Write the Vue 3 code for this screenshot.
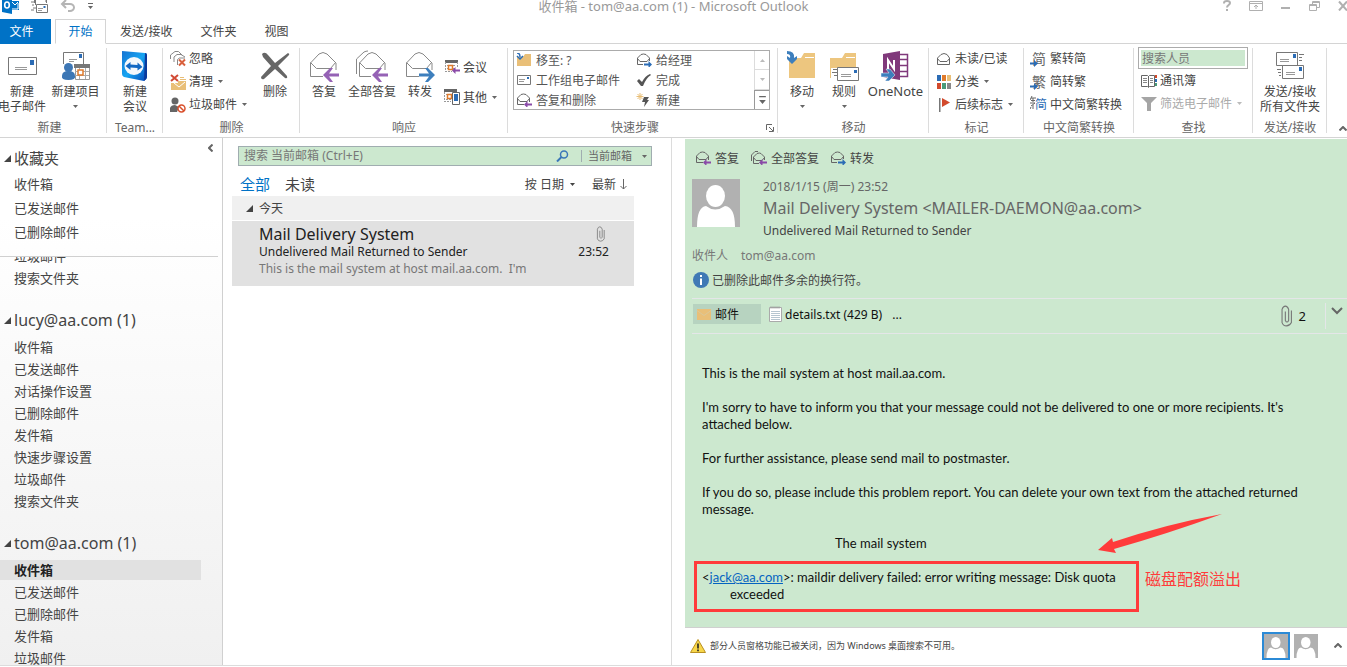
<script setup>
import { ref } from 'vue'

const searchText = ref('')
const personText = ref('')
const scope = ref('当前邮箱')

const favorites = ['收件箱', '已发送邮件', '已删除邮件']
const leading = ['垃圾邮件', '搜索文件夹']
const accounts = [
  {
    name: 'lucy@aa.com (1)',
    folders: ['收件箱', '已发送邮件', '对话操作设置', '已删除邮件', '发件箱', '快速步骤设置', '垃圾邮件', '搜索文件夹'],
    active: -1,
  },
  {
    name: 'tom@aa.com (1)',
    folders: ['收件箱', '已发送邮件', '已删除邮件', '发件箱', '垃圾邮件'],
    active: 0,
  },
]
const quickSteps = [
  { icon: 'folder-move', text: '移至: ?' },
  { icon: 'mail-reply-fwd', text: '给经理' },
  { icon: 'mail-flat', text: '工作组电子邮件' },
  { icon: 'check', text: '完成' },
  { icon: 'mail-reply', text: '答复和删除' },
  { icon: 'spark', text: '新建' },
]
const windowButtons = [
  { icon: 'help', label: '帮助' },
  { icon: 'ribbon-opts', label: '功能区显示选项' },
  { icon: 'minimize', label: '最小化' },
  { icon: 'restore', label: '还原' },
  { icon: 'close', label: '关闭' },
]
</script>

<template>
  <div class="app">
    <svg class="defs" aria-hidden="true">
      <symbol id="caret" viewBox="0 0 5 3"><path d="M0 0h5L2.500 3z" fill="currentColor" /></symbol>
      <symbol id="tri" viewBox="0 0 7 7"><path d="M7 0v7H0z" fill="#444" /></symbol>
      <symbol id="outlook" viewBox="0 0 17 14">
        <path d="M0 0h10v14L0 12z" fill="#0072c6" />
        <path d="M10 1h7v9h-7z" fill="#0072c6" />
        <path d="M10 2l3 3 3-3M10 9h6V3" fill="none" stroke="#fff" stroke-width="1" />
        <ellipse cx="5" cy="5" rx="2.300" ry="3" fill="none" stroke="#fff" stroke-width="1.600" />
      </symbol>
      <symbol id="send-all-sm" viewBox="0 0 17 14">
        <path d="M3.500 3V0M0 2h3M1 5h2M2 8h3M0 10h3M15 0v2" stroke="#777" fill="none" />
        <path d="M4.500 5V-2h11v5" stroke="#777" fill="none" />
        <path d="M5.500 4.500h11v8h-11z" fill="#fff" stroke="#777" />
        <path d="M7 8.500h5M7 10.500h4" stroke="#999" /><path d="M12.500 6h2v2h-2z" fill="#2b6cb5" />
      </symbol>
      <symbol id="undo" viewBox="0 0 16 12">
        <path d="M2 4h8a4 3.500 0 0 1 0 7H8M6 0L2 4l4 4" fill="none" stroke="#b5b5b5" stroke-width="2" />
      </symbol>
      <symbol id="qat" viewBox="0 0 5 6"><path d="M0 0h5v1H0zM0 3h5L2.500 6z" fill="#666" /></symbol>
      <symbol id="help" viewBox="0 0 14 12">
        <path d="M4 3.500V3a3 2 0 0 1 6 0c0 2-3 2-3 4.500M7 9v2" fill="none" stroke="currentColor" stroke-width="2" />
      </symbol>
      <symbol id="ribbon-opts" viewBox="0 0 14 12">
        <path d="M.5 1.500h13v9H.5zM.5 3.500h13M7 9V5M5 7l2-2 2 2" fill="none" stroke="currentColor" />
      </symbol>
      <symbol id="minimize" viewBox="0 0 14 12"><path d="M3 7h9v2H3z" fill="currentColor" /></symbol>
      <symbol id="restore" viewBox="0 0 14 12">
        <path d="M2.500 4.500h7v6h-7zM2 5.500h8M5.500 4V1.500h7v6H10M5 2.500h8" fill="none" stroke="currentColor" />
      </symbol>
      <symbol id="close" viewBox="0 0 14 12"><path d="M3 1.500l8 9M11 1.500l-8 9" stroke="currentColor" stroke-width="2" /></symbol>

      <symbol id="new-mail" viewBox="0 0 30 32">
        <path d="M1.500 7.500h28v17h-28z" fill="#fff" stroke="#777" />
        <path d="M8 17.500h12M8 19.500h12" stroke="#999" /><path d="M23 10h4v5h-4z" fill="#2b6cb5" />
      </symbol>
      <symbol id="new-items" viewBox="0 0 30 32">
        <path d="M2.500 14V2.500h20v12" fill="#fff" stroke="#777" />
        <path d="M8 9.500h8M8 11.500h5" stroke="#999" /><path d="M18 4h3v4h-3z" fill="#2b6cb5" />
        <path d="M14.500 15.500h14v14h-14z" fill="#fff" stroke="#999" />
        <path d="M13 14h16v4H13z" fill="#777" />
        <path d="M14 21.500h14M14 25.500h14M18.500 18v11M24.500 18v11" stroke="#aaa" />
        <path d="M17 20h5v5h-5z" fill="#fff" stroke="#e07b2c" stroke-width="1.500" />
        <circle cx="7.500" cy="17.500" r="4.500" fill="#3d77b5" />
        <path d="M1 26q0-5 6.500-5T14 26q1 4-6.500 4T1 26z" fill="#3d77b5" />
      </symbol>
      <symbol id="teamviewer" viewBox="0 0 30 32">
        <defs>
          <linearGradient id="tvg" x1="0" y1="0" x2="1" y2="1">
            <stop offset="0" stop-color="#1673d2" /><stop offset=".5" stop-color="#16a5f2" /><stop offset="1" stop-color="#0546b8" />
          </linearGradient>
        </defs>
        <path d="M2 1l23 2q2 0 2 2v22q0 2-3 4L4 27q-2-1-2-3z" fill="url(#tvg)" />
        <path d="M25 3q2 0 2 2v22q0 2-3 4z" fill="#0a3a9c" />
        <ellipse cx="14" cy="16" rx="9.500" ry="9" fill="#f4f8fc" />
        <path d="M5.500 16l5-4v2.500l7 .5v-2.500l5 4.500-5 3.500v-2.500l-7-.5v2.500z" fill="#1268c4" />
      </symbol>
      <symbol id="ignore" viewBox="0 0 16 16">
        <path d="M.5 8V4L5 .5h3.500L12 4M4 11V6l3-2.500h4l4 2.500M7.500 14V8.500L9.500 7H15" fill="none" stroke="#888" />
        <path d="M9 8.500l6 6M15 8.500l-6 6" stroke="#d9603c" stroke-width="2" />
      </symbol>
      <symbol id="clean" viewBox="0 0 16 16">
        <path d="M1 1l7 6M8 1L1 7" stroke="#d24a35" stroke-width="2" />
        <path d="M10 3.500h4M10 5.500h6" stroke="#e9bf78" stroke-width="1" />
        <path d="M1 9h7V7h8v9H1z" fill="#e9bf78" /><path d="M4 9l5 4 6-5" fill="none" stroke="#fff" />
      </symbol>
      <symbol id="junk" viewBox="0 0 16 16">
        <circle cx="5" cy="4" r="3.500" fill="#666" /><path d="M0 15V11q1-3 5-3l4 2-2 5z" fill="#666" />
        <circle cx="11.500" cy="11.500" r="3.500" fill="#fff" stroke="#d9502c" stroke-width="1.500" />
        <path d="M9 9l5 5" stroke="#d9502c" stroke-width="1.500" />
      </symbol>
      <symbol id="delete" viewBox="0 0 30 32">
        <path d="M2 4q3-3 6 1l7 8L28 3q2 1 1 2L18 16l9 10q1 3-2 2L15 19 4 29q-3 1-3-2l10-11L3 7z" fill="#666" />
      </symbol>
      <symbol id="reply" viewBox="0 0 30 32">
        <path d="M14 26.500H1.500V13L10 4q4-3 8 0l9 9v7M1.500 12.500l6 6h14l5-6" fill="none" stroke="#888" />
        <path d="M14 25l7-7h3l-4 5.500h10v3H20l4 5.500h-3z" fill="#9562b5" />
      </symbol>
      <symbol id="reply-all" viewBox="0 0 34 32">
        <path d="M1.500 24V9L9 2q2-1 4-1" fill="none" stroke="#888" />
        <path d="M16 26.500H4.500V13L13 4q4-3 8 0l9 9v7M4.500 12.500l6 6h14l5-6" fill="none" stroke="#888" />
        <path d="M17 25l7-7h3l-4 5.500h10v3H23l4 5.500h-3z" fill="#9562b5" />
      </symbol>
      <symbol id="forward" viewBox="0 0 30 32">
        <path d="M14 26.500H1.500V13L10 4q4-3 8 0l9 9v7M1.500 12.500l6 6h14l5-6" fill="none" stroke="#888" />
        <path d="M30 25l-7-7h-3l4 5.500H14v3h10L20 32h3z" fill="#3d7fbd" />
      </symbol>
      <symbol id="meeting" viewBox="0 0 16 16">
        <path d="M1 1h13v3H1z" fill="#666" />
        <path d="M1.500 3v9M13.500 3v5M1 12.500h7M3 6.500h9M3 9.500h8" stroke="#999" stroke-dasharray="2 1" fill="none" />
        <path d="M4.500 6.500h4v4h-4z" fill="#fff" stroke="#e07b2c" stroke-width="1.500" />
        <path d="M8 11.500L11.500 8v2.500H16v2h-4.500V15z" fill="#8a4aa8" />
      </symbol>
      <symbol id="more" viewBox="0 0 16 16">
        <path d="M0 0h13v3H0z" fill="#666" />
        <path d="M.5 3v9M0 12.500h7M2 5.500h6M2 10.500h5" stroke="#999" stroke-dasharray="2 1" fill="none" />
        <path d="M3.500 5.500h4v4h-4z" fill="#fff" stroke="#e07b2c" stroke-width="1.500" />
        <path d="M8.500 3.500h7v12h-7z" fill="#fff" stroke="#666" /><path d="M10 5h4v7h-4z" fill="#2b6cb5" />
      </symbol>
      <symbol id="folder-move" viewBox="0 0 16 14">
        <path d="M2 4h5l2-3h6v12H1V4z" fill="#e9bf78" />
        <path d="M1 0q3 0 3 4M1 3l3 3 3-3" stroke="#2b6cb5" stroke-width="1.500" fill="none" />
      </symbol>
      <symbol id="mail-flat" viewBox="0 0 16 14">
        <path d="M1.500 2.500h13v9h-13z" fill="#fff" stroke="#777" /><path d="M3 6.500h6M3 8.500h5" stroke="#999" /><path d="M11 4h2v2h-2z" fill="#2b6cb5" />
      </symbol>
      <symbol id="mail-reply" viewBox="0 0 16 14">
        <path d="M8 11.500H1.500V5L5 1.500q2.500-1 5 0L13.500 5v4M1.500 5.500L4 8.500h7l2.500-3" fill="none" stroke="#666" />
        <path d="M8 11.500L11.500 8v2.500H16v2h-4.500V15z" fill="#8a4aa8" />
      </symbol>
      <symbol id="mail-reply-all" viewBox="0 0 17 14">
        <path d="M1.500 10V4L5 .5h3" fill="none" stroke="#666" />
        <path d="M9 12.500H3.500V6L7 2.500q2.500-1 4 0L14.500 6v3M3.500 6.500L6 9.500h6l2.500-3" fill="none" stroke="#666" />
        <path d="M9 11.500L12.500 8v2.500H17v2h-4.500V15z" fill="#8a4aa8" />
      </symbol>
      <symbol id="mail-reply-fwd" viewBox="0 0 16 14">
        <path d="M7 11.500H1.500V5L5 1.500q2.500-1 5 0L13.500 5v3M1.500 5.500L4 8.500h7l2.500-3" fill="none" stroke="#666" />
        <path d="M16 11.500L12.500 8v2.500H8v2h4.500V15z" fill="#2b6cb5" />
      </symbol>
      <symbol id="check" viewBox="0 0 16 14"><path d="M1 8l2-2 3 3q3-6 8-8l1 1q-5 3-8 11H5z" fill="#555" /></symbol>
      <symbol id="spark" viewBox="0 0 16 14">
        <path d="M4 0v7M.5 3.500h7M1.500 1l5 5M6.500 1l-5 5" stroke="#e9bf78" /><path d="M8 4h5l-2 3h2l-5 7 1-5H6z" fill="#555" />
      </symbol>
      <symbol id="launcher" viewBox="0 0 8 8"><path d="M.5 6V.5H6M3 3l4 4M7.500 3v4.500H3" fill="none" stroke="#666" /></symbol>
      <symbol id="move" viewBox="0 0 30 32">
        <path d="M2 8h12l3-5h11v25H2z" fill="#edc67f" /><path d="M18 7.500h9" stroke="#fff" />
        <path d="M0 1q8 0 7 7l3-2v3l-5 5-5-5V6l3 2q1-4-3-4z" fill="#3d7fbd" />
      </symbol>
      <symbol id="rules" viewBox="0 0 30 32">
        <path d="M1 8h12l3-5h11v25H1z" fill="#edc67f" /><path d="M17 7.500h9" stroke="#fff" />
        <path d="M2 18h10v13H2z" fill="#fff" /><path d="M4 19.500h5M3 22.500h5M5 25.500h4" stroke="#777" />
        <path d="M8.500 17.500h21v13h-21z" fill="#fff" stroke="#777" /><path d="M12 24.500h10M12 26.500h10" stroke="#999" /><path d="M25 20h3v3h-3z" fill="#2b6cb5" />
      </symbol>
      <symbol id="onenote" viewBox="0 0 30 32">
        <path d="M17 4.500h9.500v22H17M19 9.500h7M19 15.500h7M19 21.500h7" fill="none" stroke="#80397b" stroke-width="1.500" />
        <path d="M2 4l17-3v29L2 27z" fill="#80397b" />
        <path d="M7 19v-9l6 9v-9" fill="none" stroke="#fff" stroke-width="2" />
        <path d="M0 23h8l-3-4h4l5 6-6 6H4l3-4H0z" fill="#3d7fbd" stroke="#fff" stroke-width=".5" />
      </symbol>
      <symbol id="unread" viewBox="0 0 16 14">
        <path d="M1.500 12.500V6L5 2.500q3-2 6 0L13.500 6v6.500zM1.500 6.500L4 9.500h7l2.500-3" fill="none" stroke="#666" />
      </symbol>
      <symbol id="categories" viewBox="0 0 16 16">
        <path d="M1 1h4v6H1z" fill="#2b6cb5" /><path d="M6 1h4v6H6z" fill="#e07b2c" /><path d="M11 1h4v6h-4z" fill="#e9bf78" />
        <path d="M1 9h4v6H1z" fill="#d24a2c" /><path d="M6 9h4v6H6z" fill="#4a9a78" /><path d="M11 9h4v6h-4z" fill="#888" />
      </symbol>
      <symbol id="flag" viewBox="0 0 16 16"><path d="M3 1h1.500v14H3z" fill="#777" /><path d="M6 1l8 4.500L6 10z" fill="#d24a2c" /></symbol>
      <symbol id="arrow-blue" viewBox="0 0 8 7"><path d="M0 2.500h4V0l4 3.500L4 7V4.500H0z" fill="#2b6cb5" /></symbol>
      <symbol id="strokes" viewBox="0 0 6 13">
        <path d="M2 0L0 4M1 2h5M1 4.500h4M3 2v4M0 7h5L1 10M3 9v4M1 11l-1 2" fill="none" stroke="#666" />
      </symbol>
      <symbol id="book" viewBox="0 0 16 14">
        <path d="M.5 1.500h6l1 1 1-1h5v11h-5l-1 1-1-1h-6zM7.500 2v11" fill="#fff" stroke="#666" />
        <path d="M2 4.500h4M2 6.500h4M2 8.500h4M9 4.500h3M9 6.500h3M9 8.500h3" stroke="#888" />
        <path d="M14 1h2v3h-2z" fill="#d24a2c" /><path d="M14 5h2v3h-2z" fill="#2b6cb5" /><path d="M14 9h2v3h-2z" fill="#4a9a78" />
      </symbol>
      <symbol id="funnel" viewBox="0 0 16 14"><path d="M0 0h16L10 6v8H6V6z" fill="#a5a5a5" /></symbol>
      <symbol id="send-all" viewBox="0 0 30 32">
        <path d="M1.500 2.500h21v13h-21z" fill="#fff" stroke="#777" /><path d="M5 9.500h9M5 11.500h9" stroke="#999" /><path d="M18 4h3v4h-3z" fill="#2b6cb5" />
        <path d="M24 4.500h5M24 7.500h3M24 10.500h3M2 19.500h4M3 22.500h3M4 25.500h2" stroke="#777" />
        <path d="M7.500 15.500h21v13h-21z" fill="#fff" stroke="#777" /><path d="M11 22.500h9M11 24.500h9" stroke="#999" /><path d="M24 17h3v4h-3z" fill="#2b6cb5" />
      </symbol>
      <symbol id="chev-up" viewBox="0 0 8 5"><path d="M.5 4.500L4 1l3.500 3.500" fill="none" stroke="#666" stroke-width="2" /></symbol>
      <symbol id="chev-down" viewBox="0 0 12 8"><path d="M1 1l5 5 5-5" fill="none" stroke="#666" stroke-width="2" /></symbol>
      <symbol id="chev-left" viewBox="0 0 5 8"><path d="M4.500 .5L1 4l3.500 3.500" fill="none" stroke="#666" stroke-width="2" /></symbol>
      <symbol id="lens" viewBox="0 0 13 12">
        <circle cx="8" cy="4.500" r="3.500" fill="none" stroke="#3a76b8" stroke-width="1.500" /><path d="M5.500 7L1 11.500" stroke="#3a76b8" stroke-width="2" />
      </symbol>
      <symbol id="arrow-down" viewBox="0 0 7 11"><path d="M3.500 0v10M.5 7l3 3 3-3" fill="none" stroke="#666" /></symbol>
      <symbol id="clip" viewBox="0 0 10 20">
        <path d="M3.500 6v8q1.500 3 3 0V4q-1-3-3-3T.5 4v12q1 3 4 3t4.500-3V5" fill="none" stroke="#777" />
      </symbol>
      <symbol id="person" viewBox="0 0 48 48">
        <path d="M0 0h48v48H0z" fill="#b1b1b1" /><ellipse cx="23.500" cy="17" rx="9.500" ry="11" fill="#fff" />
        <path d="M5 48q0-20 9-21 9 7 19 0 10 1 10 21z" fill="#fff" />
      </symbol>
      <symbol id="info" viewBox="0 0 16 16">
        <circle cx="8" cy="8" r="8" fill="#4079b5" /><path d="M7 3h2v2H7zM7 6.500h2V13H7z" fill="#fff" />
      </symbol>
      <symbol id="mail-orange" viewBox="0 0 14 11"><path d="M0 0h14v11H0z" fill="#e9bf78" /><path d="M0 1.500l7 5 7-5" fill="none" stroke="#dbc89a" /></symbol>
      <symbol id="txt" viewBox="0 0 14 16">
        <path d="M.5 1.500h12v14H.5z" fill="#fff" stroke="#aaa" /><path d="M2 0v3M4 0v3M6 0v3M8 0v3M10 0v3" stroke="#888" stroke-width=".5" />
        <path d="M2 5.500h9M2 7.500h9M2 9.500h9M2 11.500h9M2 13.500h9" stroke="#b5c5d0" />
      </symbol>
      <symbol id="warn" viewBox="0 0 16 14">
        <path d="M8 .5l7.500 13H.5z" fill="#f7d64a" stroke="#b99022" /><path d="M7.200 4.500h1.600v5H7.200zM7.200 10.500h1.600v1.700H7.200z" fill="#222" />
      </symbol>
    </svg>

    <header class="titlebar">
      <div class="qat">
        <svg width="17" height="14"><use href="#outlook" /></svg>
        <svg width="17" height="14"><use href="#send-all-sm" /></svg>
        <svg width="16" height="12"><use href="#undo" /></svg>
        <svg width="5" height="6"><use href="#qat" /></svg>
      </div>
      <h1>收件箱 - tom@aa.com (1) - Microsoft Outlook</h1>
      <div class="winbtns">
        <button v-for="b in windowButtons" :key="b.icon" :aria-label="b.label">
          <svg width="14" height="12"><use :href="'#' + b.icon" /></svg>
        </button>
      </div>
    </header>

    <nav class="tabs">
      <button class="tab file">文件</button>
      <button class="tab active">开始</button>
      <button class="tab">发送/接收</button>
      <button class="tab">文件夹</button>
      <button class="tab">视图</button>
      <span class="rest"></span>
    </nav>

    <div class="ribbon">
      <section class="group">
        <div class="tools">
          <button class="big narrow"><svg width="30" height="32"><use href="#new-mail" /></svg><span>新建</span><span>电子邮件</span></button>
          <button class="big grow"><svg width="30" height="32"><use href="#new-items" /></svg><span>新建项目</span><i><svg width="5" height="3"><use href="#caret" /></svg></i></button>
        </div>
        <h2 class="first">新建</h2>
      </section>
      <section class="group">
        <div class="tools">
          <button class="big grow"><svg width="30" height="32"><use href="#teamviewer" /></svg><span>新建</span><span>会议</span></button>
        </div>
        <h2>Team...</h2>
      </section>
      <section class="group">
        <div class="tools">
          <div class="rows">
            <button><svg width="16" height="16"><use href="#ignore" /></svg>忽略</button>
            <button><svg width="16" height="16"><use href="#clean" /></svg>清理<svg class="car" width="5" height="3"><use href="#caret" /></svg></button>
            <button><svg width="16" height="16"><use href="#junk" /></svg>垃圾邮件<svg class="car" width="5" height="3"><use href="#caret" /></svg></button>
          </div>
          <button class="big grow"><svg width="30" height="32"><use href="#delete" /></svg><span>删除</span></button>
        </div>
        <h2>删除</h2>
      </section>
      <section class="group">
        <div class="tools">
          <button class="big reply"><svg width="30" height="32"><use href="#reply" /></svg><span>答复</span></button>
          <button class="big reply"><svg width="34" height="32"><use href="#reply-all" /></svg><span>全部答复</span></button>
          <button class="big reply"><svg width="30" height="32"><use href="#forward" /></svg><span>转发</span></button>
          <div class="rows two">
            <button><svg width="16" height="16"><use href="#meeting" /></svg>会议</button>
            <button><svg width="16" height="16"><use href="#more" /></svg>其他<svg class="car" width="5" height="3"><use href="#caret" /></svg></button>
          </div>
        </div>
        <h2>响应</h2>
      </section>
      <section class="group">
        <div class="tools">
          <div class="gallery">
            <div class="steps">
              <button v-for="s in quickSteps" :key="s.text"><svg width="16" height="14"><use :href="'#' + s.icon" /></svg>{{ s.text }}</button>
            </div>
            <div class="scroll">
              <button class="dim" aria-label="上一行"><svg class="flip" width="5" height="3"><use href="#caret" /></svg></button>
              <button class="dim" aria-label="下一行"><svg width="5" height="3"><use href="#caret" /></svg></button>
              <button class="on" aria-label="其他"><svg width="7" height="8"><use href="#qat" /></svg></button>
            </div>
          </div>
        </div>
        <h2 class="launch"><span>快速步骤</span><button aria-label="管理快速步骤"><svg width="8" height="8"><use href="#launcher" /></svg></button></h2>
      </section>
      <section class="group">
        <div class="tools">
          <button class="big reply"><svg width="30" height="32"><use href="#move" /></svg><span>移动</span><i><svg width="5" height="3"><use href="#caret" /></svg></i></button>
          <button class="big rule"><svg width="30" height="32"><use href="#rules" /></svg><span>规则</span><i><svg width="5" height="3"><use href="#caret" /></svg></i></button>
          <button class="big grow"><svg width="30" height="32"><use href="#onenote" /></svg><span class="onenote">OneNote</span></button>
        </div>
        <h2>移动</h2>
      </section>
      <section class="group">
        <div class="tools">
          <div class="rows">
            <button><svg width="16" height="14"><use href="#unread" /></svg>未读/已读</button>
            <button><svg width="16" height="16"><use href="#categories" /></svg>分类<svg class="car" width="5" height="3"><use href="#caret" /></svg></button>
            <button><svg width="16" height="16"><use href="#flag" /></svg>后续标志<svg class="car" width="5" height="3"><use href="#caret" /></svg></button>
          </div>
        </div>
        <h2>标记</h2>
      </section>
      <section class="group">
        <div class="tools">
          <div class="rows">
            <button><b class="glyph">简<svg width="8" height="7"><use href="#arrow-blue" /></svg></b>繁转简</button>
            <button><b class="glyph">繁<svg width="8" height="7"><use href="#arrow-blue" /></svg></b>简转繁</button>
            <button><b class="glyph pair"><svg width="6" height="13"><use href="#strokes" /></svg>简</b>中文简繁转换</button>
          </div>
        </div>
        <h2>中文简繁转换</h2>
      </section>
      <section class="group">
        <div class="tools find">
          <label class="people"><input v-model="personText" type="text" placeholder="搜索人员" aria-label="搜索人员" /></label>
          <button><svg width="16" height="14"><use href="#book" /></svg>通讯簿</button>
          <button class="dim"><svg width="16" height="14"><use href="#funnel" /></svg>筛选电子邮件<svg class="car" width="5" height="3"><use href="#caret" /></svg></button>
        </div>
        <h2>查找</h2>
      </section>
      <section class="group">
        <div class="tools">
          <button class="big grow"><svg width="30" height="32"><use href="#send-all" /></svg><span>发送/接收</span><span>所有文件夹</span></button>
        </div>
        <h2>发送/接收</h2>
      </section>
      <div class="fold"><button aria-label="折叠功能区"><svg width="8" height="5"><use href="#chev-up" /></svg></button></div>
    </div>

    <main class="body">
      <aside class="side">
        <div class="fav">
          <button class="collapse" aria-label="折叠文件夹窗格"><svg width="5" height="8"><use href="#chev-left" /></svg></button>
          <h3><svg width="7" height="7"><use href="#tri" /></svg>收藏夹</h3>
          <a v-for="f in favorites" :key="f" href="#">{{ f }}</a>
        </div>
        <div class="tree">
          <div class="lead"><a v-for="f in leading" :key="f" href="#">{{ f }}</a></div>
          <template v-for="acc in accounts" :key="acc.name">
            <h3><svg width="7" height="7"><use href="#tri" /></svg>{{ acc.name }}</h3>
            <a v-for="(f, i) in acc.folders" :key="f" href="#" :class="{ sel: i === acc.active }"><span>{{ f }}</span></a>
          </template>
        </div>
      </aside>

      <section class="list">
        <div class="search">
          <input v-model="searchText" type="text" placeholder="搜索 当前邮箱 (Ctrl+E)" aria-label="搜索当前邮箱" />
          <svg width="13" height="12"><use href="#lens" /></svg>
          <label class="scope">
            <select v-model="scope" aria-label="搜索范围"><option>当前邮箱</option><option>所有邮箱</option></select>
            <svg width="5" height="3"><use href="#caret" /></svg>
          </label>
        </div>
        <div class="filter">
          <button class="cur">全部</button>
          <button>未读</button>
          <span class="sp"></span>
          <button class="sort">按 日期<svg width="5" height="3"><use href="#caret" /></svg></button>
          <button class="sort">最新<svg width="7" height="11"><use href="#arrow-down" /></svg></button>
        </div>
        <div class="day"><svg width="7" height="7"><use href="#tri" /></svg>今天</div>
        <article class="msg">
          <div class="l1"><span>Mail Delivery System</span><svg width="10" height="16"><use href="#clip" /></svg></div>
          <div class="l2"><span>Undelivered Mail Returned to Sender</span><time>23:52</time></div>
          <div class="l3">This is the mail system at host mail.aa.com.&nbsp; I'm</div>
        </article>
      </section>

      <section class="read">
        <div class="pane">
          <div class="acts">
            <button><svg width="16" height="14"><use href="#mail-reply" /></svg>答复</button>
            <button><svg width="17" height="14"><use href="#mail-reply-all" /></svg>全部答复</button>
            <button><svg width="16" height="14"><use href="#mail-reply-fwd" /></svg>转发</button>
          </div>
          <div class="head">
            <svg width="48" height="48"><use href="#person" /></svg>
            <div>
              <p class="date">2018/1/15 (周一) 23:52</p>
              <p class="from">Mail Delivery System &lt;MAILER-DAEMON@aa.com&gt;</p>
              <p class="subj">Undelivered Mail Returned to Sender</p>
            </div>
          </div>
          <div class="to"><span>收件人</span><span>tom@aa.com</span></div>
          <div class="note"><svg width="16" height="16"><use href="#info" /></svg>已删除此邮件多余的换行符。</div>
          <div class="attach">
            <button class="mailtab"><svg width="14" height="11"><use href="#mail-orange" /></svg>邮件</button>
            <button class="file"><svg width="14" height="16"><use href="#txt" /></svg>details.txt (429 B)</button>
            <span class="dots">...</span>
            <span class="sp"></span>
            <span class="count"><svg width="12" height="22"><use href="#clip" /></svg>2</span>
            <button class="expand" aria-label="展开"><svg width="12" height="8"><use href="#chev-down" /></svg></button>
          </div>
          <div class="text">
            <p>This is the mail system at host mail.aa.com.</p>
            <p>I'm sorry to have to inform you that your message could not be delivered to one or more recipients. It's<br />attached below.</p>
            <p>For further assistance, please send mail to postmaster.</p>
            <p>If you do so, please include this problem report. You can delete your own text from the attached returned<br />message.</p>
            <p class="sign">The mail system</p>
            <div class="marked">
              <div class="frame">&lt;<a href="#">jack@aa.com</a>&gt;: maildir delivery failed: error writing message: Disk quota<br /><span class="indent">exceeded</span></div>
              <span class="remark">磁盘配额溢出</span>
              <svg class="arrow" width="126" height="40" viewBox="0 0 126 40"><path d="M1 36L15 24L16 28Q70 10 125 0Q70 20 17 35L19 39z" fill="#ff3b3b" /></svg>
            </div>
          </div>
        </div>
        <footer class="people-pane">
          <svg width="16" height="14"><use href="#warn" /></svg>
          <span>部分人员窗格功能已被关闭，因为 Windows 桌面搜索不可用。</span>
          <span class="sp"></span>
          <button class="ava on" aria-label="发件人"><svg width="24" height="24"><use href="#person" /></svg></button>
          <button class="ava" aria-label="收件人"><svg width="24" height="24"><use href="#person" /></svg></button>
          <button class="up" aria-label="展开人员窗格"><svg width="8" height="5"><use href="#chev-up" /></svg></button>
        </footer>
      </section>
    </main>
  </div>
</template>

<style>
body { margin: 0; background: #fff; overflow: hidden; }
</style>

<style scoped>
* { box-sizing: border-box; }
.app {
  display: flex; flex-direction: column; height: 100vh; overflow: hidden;
  font: 12px/15px "Noto Sans", "Noto Sans CJK SC", sans-serif; color: #444;
}
.defs { position: absolute; width: 0; height: 0; }
svg { display: block; flex: none; }
button, input, select { font: inherit; color: inherit; background: none; border: 0; padding: 0; margin: 0; }
button { display: flex; align-items: center; white-space: nowrap; }
h1, h2, h3, p { margin: 0; font-weight: 400; }
a { color: inherit; text-decoration: none; }
.sp { flex: 1; }

.titlebar { display: grid; grid-template-columns: 1fr auto 1fr; height: 19px; }
.titlebar h1 { font-size: 13px; line-height: 13px; color: #999; }
.qat { display: flex; padding-left: 2px; gap: 12px; }
.qat svg:nth-child(4) { margin-top: 3px; }
.winbtns { display: flex; justify-content: flex-end; gap: 15px; color: #b0b0b0; height: 11px; overflow: hidden; margin-right: -3px; }

.tabs { display: flex; height: 25px; }
.tab { justify-content: center; padding: 0 14px; border-bottom: 1px solid #d4d4d4; }
.tab.file { background: #0072c6; color: #fff; border-color: #0072c6; width: 51px; padding: 0 8px 0 0; }
.tab.active { color: #0072c6; border: 1px solid #d4d4d4; border-bottom-color: #fff; width: 51px; padding: 0; margin-left: 4px; }
.tabs .rest { flex: 1; border-bottom: 1px solid #d4d4d4; }

.ribbon {
  display: grid; grid-template-columns: 107px 56px 137px 208px 270px 151px 95px 110px 119px 74px 1fr;
  height: 94px; border-bottom: 1px solid #d4d4d4;
}
.group { display: flex; flex-direction: column; min-width: 0; position: relative; }
.group::after { content: ""; position: absolute; right: 0; top: 4px; bottom: 4px; border-right: 1px solid #dcdcdc; }
.tools { display: flex; height: 76px; padding-top: 3px; }
.group h2 { text-align: center; font-size: 12px; line-height: 16px; color: #666; }
.group h2.first { padding-right: 8px; }
.big { flex-direction: column; justify-content: flex-start; padding: 3px 0 0; height: 72px; }
.big > svg { margin-bottom: 2px; }
.big span { line-height: 15px; }
.big i { height: 15px; display: flex; align-items: center; color: #666; }
.narrow { width: 44px; }
.grow { flex: 1; }
.reply { width: 48px; }
.rule { width: 36px; }
.onenote { font-size: 13px; }
.rows { display: flex; flex-direction: column; padding-left: 7px; width: 87px; flex: none; }
.rows button { height: 23px; gap: 3px; }
.rows.two { padding: 5px 0 0; width: 60px; }
.rows.two button { height: 30px; }
.car { margin-left: 2px; color: #666; }
.glyph { position: relative; flex: none; font-weight: 400; font-size: 14px; line-height: 16px; width: 16px; color: #666; }
.glyph svg { position: absolute; left: -1px; bottom: 0; }
.glyph.pair { color: #2b6cb5; font-size: 12px; text-align: right; }
.glyph.pair svg { bottom: auto; top: -1px; }
.gallery { display: flex; margin: 3px 8px 0 5px; height: 60px; flex: 1; border: 1px solid #ababab; }
.steps { flex: 1; display: grid; grid-template-columns: 120px 1fr; grid-auto-rows: 20px; color: #555; padding-left: 2px; margin-top: -1px; }
.steps button { gap: 4px; }
.scroll { width: 15px; display: flex; flex-direction: column; }
.scroll button { flex: 1; justify-content: center; border-left: 1px solid #dcdcdc; border-bottom: 1px solid #dcdcdc; color: #bbb; }
.scroll .on { border: 1px solid #999; border-width: 1px 0 0 1px; }
.flip { transform: rotate(180deg); }
.group h2.launch { display: flex; }
.launch span { flex: 1; }
.launch button { width: 16px; justify-content: center; }
.tools.find { flex-direction: column; padding-left: 4px; }
.find button { height: 23px; gap: 3px; padding-left: 3px; }
.find button.dim { color: #aaa; }
.find .dim .car { color: #bbb; }
.people { display: flex; width: 110px; height: 22px; border: 1px solid #ababab; padding: 2px; }
.people input { width: 100%; background: #cce8cf; padding: 0 0 0 1px; }
input::placeholder { color: #777; opacity: 1; }
.fold { display: flex; align-items: flex-end; justify-content: flex-end; padding-bottom: 6px; }

.body { flex: 1; display: flex; min-height: 0; margin-bottom: 1px; border-bottom: 1px solid #dcdcdc; }
.side {
  width: 223px; flex: none; display: flex; flex-direction: column; position: relative; font-size: 13px;
  background: linear-gradient(#fff, #fff 80px, #f0f0f0); border-right: 1px solid #d0d0d0;
}
.side a { display: flex; align-items: center; height: 22px; padding-left: 14px; flex: none; }
.side h3 { display: flex; align-items: center; gap: 3px; padding-left: 4px; font-size: 15px; }
.fav { height: 119px; flex: none; border-bottom: 1px solid #d0d0d0; margin-right: 4px; padding-top: 7px; }
.fav h3 { height: 27px; }
.fav a { height: 24px; }
.collapse { position: absolute; right: 9px; top: 6px; }
.tree { flex: 1; min-height: 0; overflow: hidden; display: flex; flex-direction: column; }
.lead { margin-top: -12px; }
.tree h3 { height: 32px; margin-top: 15px; flex: none; font-size: 16px; }
.side a.sel { font-weight: 700; color: #222; background: #e1e1e1; height: 20px; margin: 1px 21px 1px 0; }

.list { width: 449px; flex: none; padding: 8px 19px 0 9px; border-right: 1px solid #dcdcdc; }
.search { display: flex; align-items: center; height: 20px; margin-left: 6px; background: #cce8cf; border: 1px solid #a0adb0; color: #666; }
.search input { flex: 1; min-width: 0; padding: 0 0 2px 5px; }
.scope { display: flex; align-items: center; margin-left: 12px; padding: 0 4px 0 6px; border-left: 1px solid #a0adb0; height: 12px; font-size: 11px; }
.scope select { appearance: none; width: 54px; height: 16px; line-height: 16px; }
.filter { display: flex; align-items: center; height: 30px; padding: 6px 7px 0 8px; margin-right: 18px; }
.filter button { font-size: 15px; margin-right: 15px; }
.filter .cur { color: #0072c6; }
.filter .sort { font-size: 12px; gap: 6px; margin-right: 17px; }
.filter .sort:last-child { margin: 0; gap: 4px; }
.day { display: flex; align-items: center; gap: 6px; height: 24px; padding-left: 14px; margin-right: 18px; background: #f0f0f0; }
.msg { margin: 1px 18px 0 0; padding: 5px 25px 0 27px; background: #e1e1e1; height: 65px; color: #222; }
.msg div { display: flex; justify-content: space-between; white-space: pre; line-height: 17px; }
.msg .l1 { font-size: 16px; padding-right: 3px; }
.msg .l3 { color: #777; }

.read { flex: 1; min-width: 0; display: flex; flex-direction: column; padding-left: 13px; }
.pane { flex: 1; min-height: 0; margin-top: 1px; background: #cce8cf; border-bottom: 1px solid #d0d0d0; padding-left: 7px; }
.acts { display: flex; gap: 11px; padding: 9px 0 0 3px; height: 40px; align-items: flex-start; }
.acts button { height: 20px; gap: 4px; }
.head { display: flex; gap: 23px; height: 65px; }
.head p { white-space: nowrap; }
.date { color: #666; }
.head .from { font-size: 16px; line-height: 29px; color: #666; }
.to { display: flex; gap: 13px; color: #777; line-height: 24px; }
.note { display: flex; align-items: center; gap: 3px; height: 24px; padding-left: 1px; }
.attach { display: flex; height: 36px; align-items: center; margin-top: 6px; border: 1px solid #e4e6e8; border-width: 1px 0; padding-left: 1px; color: #111; }
.mailtab { width: 68px; height: 20px; background: #b7d3c0; padding-left: 4px; gap: 4px; }
.attach .file { margin: 0 10px 0 8px; gap: 2px; }
.attach > *:not(.count):not(.expand) { margin-bottom: 4px; }
.count { display: flex; align-items: center; gap: 6px; font-size: 13px; padding-right: 19px; }
.expand { width: 22px; height: 26px; padding: 0 0 10px 5px; border-left: 1px solid #e4e6e8; }
.text { padding: 31px 0 0 10px; font: 13px/17px Lato, "Noto Sans CJK SC", sans-serif; color: #111; }
.text p { margin-bottom: 17px; white-space: nowrap; }
.text .sign { padding-left: 133px; margin-bottom: 9px; }
.marked { position: relative; display: flex; align-items: flex-start; margin-left: -8px; }
.frame { width: 445px; border: 3px solid #ff3b3b; padding: 5px 0 6px 5px; white-space: nowrap; }
.frame a { color: #0563c1; text-decoration: underline; }
.indent { padding-left: 28px; }
.remark { color: #ff3b3b; font-size: 16px; line-height: 20px; margin: 8px 0 0 6px; white-space: nowrap; }
.arrow { position: absolute; left: 403px; top: -47px; }
.people-pane { height: 37px; flex: none; display: flex; align-items: center; padding: 0 5px 2px; font-size: 9px; color: #444; gap: 4px; }
.ava { padding: 2px 0; }
.ava.on { padding: 2px; background: #2b8ad6; }
.up { width: 20px; justify-content: flex-end; }
</style>
